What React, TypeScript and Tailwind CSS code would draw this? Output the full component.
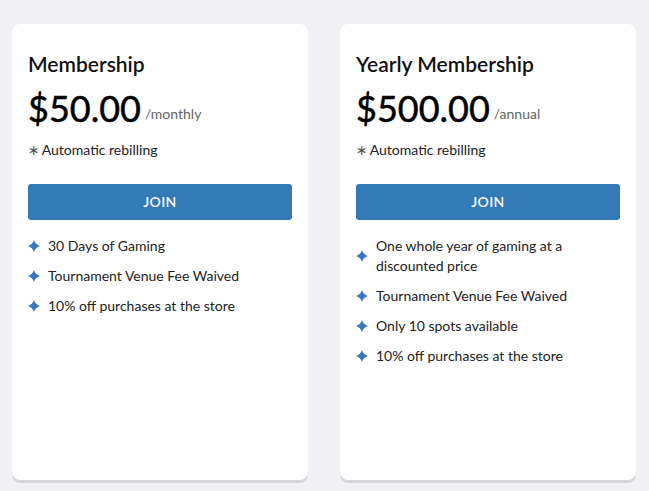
import React from 'react';

type Plan = {
  name: string;
  price: string;
  period: string;
  perks: string[];
};

const plans: Plan[] = [
  {
    name: 'Membership',
    price: '$50.00',
    period: '/monthly',
    perks: ['30 Days of Gaming', 'Tournament Venue Fee Waived', '10% off purchases at the store'],
  },
  {
    name: 'Yearly Membership',
    price: '$500.00',
    period: '/annual',
    perks: [
      'One whole year of gaming at a discounted price',
      'Tournament Venue Fee Waived',
      'Only 10 spots available',
      '10% off purchases at the store',
    ],
  },
];

function Sparkle() {
  return (
    <svg viewBox="0 0 12 12" className="w-3 h-3 shrink-0" aria-hidden>
      <path d="M6 0 Q7.4 4.6 12 6 Q7.4 7.4 6 12 Q4.6 7.4 0 6 Q4.6 4.6 6 0Z" fill="#3a78bd" />
    </svg>
  );
}

function PlanCard({ plan }: { plan: Plan }) {
  return (
    <div className="w-[296px] h-[456px] bg-white rounded-lg shadow-[0_3px_0_#d6d6dc] px-4 pt-[26px]">
      {/* Header */}
      <h2 className="text-[21px] leading-7 font-semibold text-[#111]">{plan.name}</h2>
      <div className="mt-[10px] flex items-end gap-[4px]">
        <span className="text-[36px] leading-10 text-black [-webkit-text-stroke:0.5px_black]">{plan.price}</span>
        <span className="mb-1 text-sm leading-5 text-[#666]">{plan.period}</span>
      </div>
      <p className="mt-3 text-sm leading-5 text-[#222]">
        <span className="text-[#555] mr-[2px] font-['DejaVu_Sans',sans-serif]">∗</span>Automatic rebilling
      </p>

      <button className="mt-6 w-full h-9 rounded-[3px] bg-[#337ab7] text-white text-sm font-semibold tracking-wide">
        JOIN
      </button>

      {/* Perks */}
      <ul className="mt-[11px]">
        {plan.perks.map((perk) => (
          <li key={perk} className="flex items-center gap-2 py-[5px] pr-12 text-sm leading-5 text-[#222]">
            <Sparkle />
            <span>{perk}</span>
          </li>
        ))}
      </ul>
    </div>
  );
}

export default function App() {
  return (
    <div
      className="h-[491px] w-full bg-[#f0f0f5] flex gap-8 pl-3 pt-6"
      style={{ fontFamily: 'Lato, "Open Sans", sans-serif' }}
    >
      {plans.map((p) => (
        <PlanCard key={p.name} plan={p} />
      ))}
    </div>
  );
}
